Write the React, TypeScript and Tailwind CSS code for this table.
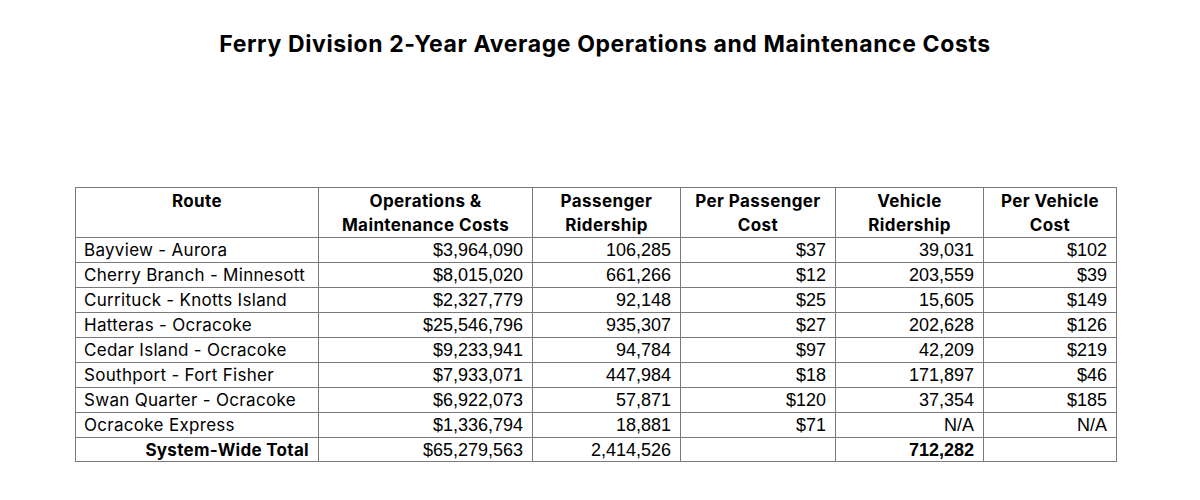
const rows = [
  ["Bayview - Aurora", "$3,964,090", "106,285", "$37", "39,031", "$102"],
  ["Cherry Branch - Minnesott", "$8,015,020", "661,266", "$12", "203,559", "$39"],
  ["Currituck - Knotts Island", "$2,327,779", "92,148", "$25", "15,605", "$149"],
  ["Hatteras - Ocracoke", "$25,546,796", "935,307", "$27", "202,628", "$126"],
  ["Cedar Island - Ocracoke", "$9,233,941", "94,784", "$97", "42,209", "$219"],
  ["Southport - Fort Fisher", "$7,933,071", "447,984", "$18", "171,897", "$46"],
  ["Swan Quarter - Ocracoke", "$6,922,073", "57,871", "$120", "37,354", "$185"],
  ["Ocracoke Express", "$1,336,794", "18,881", "$71", "N/A", "N/A"],
];

const headers = [
  ["Route", ""],
  ["Operations &", "Maintenance Costs"],
  ["Passenger", "Ridership"],
  ["Per Passenger", "Cost"],
  ["Vehicle", "Ridership"],
  ["Per Vehicle", "Cost"],
];

const widths = ["w-[243px]", "w-[214px]", "w-[148px]", "w-[155px]", "w-[148px]", "w-[133px]"];

const sans = "font-['Inter',sans-serif]";
const nums = "font-['Liberation_Sans',Arial,sans-serif]";
const cell = "border border-[#7a7a7a]";

export default function App() {
  return (
    <div className="w-[1200px] h-[500px] bg-white text-black">
      <h1 className={`${sans} pt-[29px] pl-[10px] text-center text-[23px] font-bold leading-[30px] tracking-[0.6px]`}>
        Ferry Division 2-Year Average Operations and Maintenance Costs
      </h1>

      <table className="ml-[75px] mt-[128px] w-[1041px] table-fixed border-collapse border border-[#6f6f6f]">
        <colgroup>
          {widths.map((w) => (
            <col key={w} className={w} />
          ))}
        </colgroup>
        <thead>
          <tr className="h-[48px]">
            {headers.map(([a, b]) => (
              <th
                key={a}
                className={`${sans} ${cell} align-top px-1 pt-[1px] text-center text-[17px] font-bold leading-[24px] tracking-[0.4px]`}
              >
                <div>{a}</div>
                <div>{b}</div>
              </th>
            ))}
          </tr>
        </thead>
        <tbody>
          {rows.map((r) => (
            <tr key={r[0]} className="h-[25px]">
              <td className={`${sans} ${cell} pl-[8px] text-[17px] leading-[22px] tracking-[0.3px]`}>{r[0]}</td>
              {r.slice(1).map((v, i) => (
                <td key={i} className={`${nums} ${cell} pr-[9px] text-right text-[18px] leading-[22px]`}>
                  {v}
                </td>
              ))}
            </tr>
          ))}
          <tr className="h-[24px]">
            <td className={`${sans} ${cell} pr-[9px] text-right text-[17px] font-bold leading-[22px] tracking-[0.3px]`}>
              System-Wide Total
            </td>
            <td className={`${nums} ${cell} pr-[9px] text-right text-[18px] leading-[22px]`}>$65,279,563</td>
            <td className={`${nums} ${cell} pr-[9px] text-right text-[18px] leading-[22px]`}>2,414,526</td>
            <td className={cell}></td>
            <td className={`${nums} ${cell} pr-[9px] text-right text-[18px] font-bold leading-[22px]`}>712,282</td>
            <td className={cell}></td>
          </tr>
        </tbody>
      </table>
    </div>
  );
}
